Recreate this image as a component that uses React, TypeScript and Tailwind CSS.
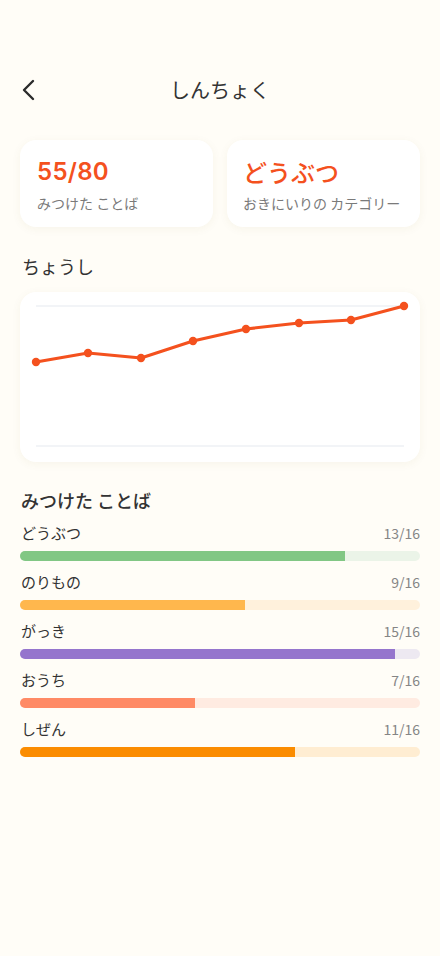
import React from "react";

const font = { fontFamily: '"Noto Sans CJK JP", "Noto Sans", sans-serif' };

const points: [number, number][] = [
  [16, 70],
  [68, 61],
  [121, 66],
  [173, 49],
  [226, 37],
  [279, 31],
  [331, 28],
  [384, 14],
];

const rows = [
  { label: "どうぶつ", value: 13, fill: "bg-[#81c784]", track: "bg-[#ebf4e8]" },
  { label: "のりもの", value: 9, fill: "bg-[#ffb74d]", track: "bg-[#fff1dc]" },
  { label: "がっき", value: 15, fill: "bg-[#9575cd]", track: "bg-[#ede9f1]" },
  { label: "おうち", value: 7, fill: "bg-[#ff8a65]", track: "bg-[#ffebe1]" },
  { label: "しぜん", value: 11, fill: "bg-[#fb8c00]", track: "bg-[#ffedd2]" },
];

export default function App() {
  return (
    <div className="min-h-screen bg-[#fffdf7] px-5 pt-[62px] text-[#333333]" style={font}>
      <div className="flex h-14 items-center">
        <div className="flex w-10 items-center">
          <svg width="16" height="24" viewBox="0 0 16 24" className="ml-[1px]">
            <polyline
              points="12,3 3,12 12,21"
              fill="none"
              stroke="#2b2b2b"
              strokeWidth="2.4"
              strokeLinecap="round"
              strokeLinejoin="round"
            />
          </svg>
        </div>
        <div className="flex-1 text-center text-[20px] font-normal leading-7 text-[#333333]">しんちょく</div>
        <div className="w-10" />
      </div>

      <div className="mt-[22px] grid grid-cols-2 gap-[14px]">
        <div className="h-[87px] rounded-2xl bg-white px-[17px] pt-[16px] shadow-[0_2px_10px_rgba(120,100,40,0.06)]">
          <div className="font-['Inter',sans-serif] text-[24px] font-semibold leading-8 tracking-[0.3px] text-[#f4511e]">55/80</div>
          <div className="mt-[5px] text-[14px] leading-5 text-[#7a7a7a]">みつけた ことば</div>
        </div>
        <div className="h-[87px] rounded-2xl bg-white px-[16px] pt-[16px] shadow-[0_2px_10px_rgba(120,100,40,0.06)]">
          <div className="text-[24px] font-medium leading-8 text-[#f4511e]">どうぶつ</div>
          <div className="mt-[5px] text-[14px] leading-5 text-[#7a7a7a]">おきにいりの カテゴリー</div>
        </div>
      </div>

      <div className="mt-[26px] pl-[2px] text-[18px] font-normal leading-[26px] text-[#333333]">ちょうし</div>

      <div className="mt-[13px] h-[170px] rounded-2xl bg-white shadow-[0_2px_10px_rgba(120,100,40,0.06)]">
        <svg width="400" height="170" viewBox="0 0 400 170">
          <line x1="16" y1="14" x2="384" y2="14" stroke="#eef0f4" strokeWidth="1.5" />
          <line x1="16" y1="154" x2="384" y2="154" stroke="#eef0f4" strokeWidth="1.5" />
          <polyline
            points={points.map((p) => p.join(",")).join(" ")}
            fill="none"
            stroke="#f4511e"
            strokeWidth="3"
            strokeLinejoin="round"
            strokeLinecap="round"
          />
          {points.map((p, i) => (
            <circle key={i} cx={p[0]} cy={p[1]} r="4.2" fill="#f4511e" />
          ))}
        </svg>
      </div>

      <div className="mt-[25px] pl-[1px] text-[18px] font-medium leading-[26px] text-[#333333]">みつけた ことば</div>

      <div className="mt-[10px] flex flex-col gap-[11px]">
        {rows.map((r) => (
          <div key={r.label}>
            <div className="flex items-center justify-between leading-5">
              <span className="pl-[1px] text-[15px] text-[#333333]">{r.label}</span>
              <span className="text-[14px] text-[#858585]">{r.value}/16</span>
            </div>
            <div className={`mt-2 h-[10px] w-full overflow-hidden rounded-full ${r.track}`}>
              <div className={`h-full ${r.fill}`} style={{ width: `${(r.value / 16) * 100}%` }} />
            </div>
          </div>
        ))}
      </div>
    </div>
  );
}
